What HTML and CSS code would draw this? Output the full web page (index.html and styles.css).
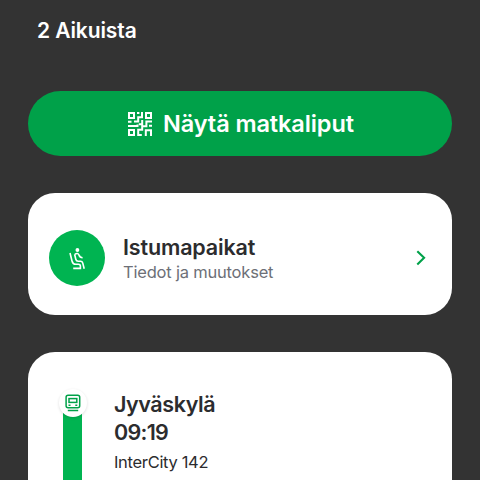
FILE: index.html
```html
<!DOCTYPE html>
<html lang="fi">
<head>
<meta charset="utf-8">
<title>Matka</title>
<link rel="stylesheet" href="styles.css">
</head>
<body>
<main class="screen">
  <p class="passengers"><span>2 Aikuista</span></p>
  <button class="tickets" type="button">
    <svg class="qr" viewBox="0 0 24 24" fill="none" stroke="#fff" stroke-width="2">
      <path d="M1 1h5v5H1zM18 1h5v5h-5zM1 18h5v5H1z"/>
      <path d="M9 1h2.4M14 0v5.2h-3.8v4.3H6M0 9.8h3.5M0 14h9.5v-1.6M14.2 8v4.2h-3.4M24 9.6h-5.6v4.6h-4.2v3.6h-4V23h3.6M21 13.8h3M17.8 24v-5.8H23V24"/>
    </svg>
    <span>Näytä matkaliput</span>
  </button>
  <section class="card seats">
    <div class="seat-badge">
      <svg class="seat" viewBox="0 0 18 24" fill="none" stroke="#fff" stroke-width="1.6">
        <circle cx="9.4" cy="4" r="1.9" fill="#fff" stroke="none"/>
        <path d="M2 7 4 15q.8 3.3 3.8 3.3h2.6q2 0 2 2v2.1H5.2M6.6 8.2l1.2 5q.5 2 2.4 2h2.4q1.6 0 2.1 1.7l1.5 5.8M6.9 8.2q3-1.8 4.1.9.8 2.6 3.6 2.6"/>
      </svg>
    </div>
    <div class="seat-copy">
      <h2 class="seat-title"><span>Istumapaikat</span></h2>
      <p class="seat-info"><span>Tiedot ja muutokset</span></p>
    </div>
    <svg class="chevron" viewBox="0 0 10 16" fill="none" stroke="#00a149" stroke-width="2.1"><path d="m1.3 1.2 6.8 6.6-6.8 6.6"/></svg>
  </section>
  <section class="card trip">
    <div class="track">
      <div class="stop">
        <svg class="train" viewBox="0 0 16 18" fill="none" stroke="#00a149" stroke-width="1.5">
          <rect x="1.1" y="1.2" width="13.6" height="12.6" rx="2"/>
          <rect x="4" y="4.6" width="7.8" height="3.8"/>
          <path d="M3.5 11.2h2M10.3 11.2h2M2.8 16.6h10.4"/>
        </svg>
      </div>
    </div>
    <div class="departure">
      <h2 class="place"><span>Jyväskylä</span></h2>
      <p class="time"><span>09:19</span></p>
      <p class="service"><span>InterCity 142</span></p>
    </div>
  </section>
</main>
</body>
</html>
```
FILE: styles.css
```css
* { box-sizing: border-box; }
body { margin: 0; background: #333; color: #2c2c2e; font-family: Inter, "Liberation Sans", sans-serif; }
h2, p { margin: 0; font-weight: 600; white-space: nowrap; }
.screen { height: 480px; overflow: hidden; padding: 17px 28px 0; }
.passengers { padding-left: 9px; color: #fff; font-size: 21px; line-height: 28px; height: 74px; letter-spacing: -0.1px; }
.tickets { display: flex; align-items: center; justify-content: flex-start; width: 424px; height: 65px; margin: 0 0 37px; padding: 0 0 0 100px; gap: 11px; border: 0; border-radius: 33px; background: #00a149; color: #fff; font: 600 23.5px/32px Inter, "Liberation Sans", sans-serif; letter-spacing: -0.1px; }
.qr { width: 24px; height: 24px; flex: none; }
.card { background: #fff; border-radius: 27px; display: flex; }
.seats { height: 122px; align-items: center; padding: 8px 26px 0 21px; margin-bottom: 37px; }
.seat-badge { width: 56px; height: 56px; border-radius: 50%; background: #00b451; display: grid; place-items: center; }
.seat { width: 18px; height: 24px; }
.seat-copy { flex: 1; padding-left: 18px; }
.seat-title { font-size: 21.5px; line-height: 28px; letter-spacing: -0.15px; }
.seat-info { font-size: 16.5px; line-height: 22px; font-weight: 400; color: #6d7077; letter-spacing: -0.2px; }
.chevron { width: 10px; height: 16px; }
.trip { height: 200px; padding: 37px 30px 0; }
.track { width: 19px; height: 200px; margin-left: 5px; background: linear-gradient(transparent 14px, #00b451 14px); }
.stop { width: 28px; height: 28px; margin-left: -4px; border-radius: 50%; background: #fff; display: grid; place-items: center; box-shadow: 0 1px 3px #0002; }
.train { width: 16px; height: 18px; }
.departure { padding: 1px 0 0 32px; }
.place, .time { font-size: 21.5px; line-height: 28px; letter-spacing: -0.4px; }
.time { letter-spacing: -0.7px; }
.service { font-size: 16.5px; line-height: 24px; font-weight: 400; margin-top: 4px; letter-spacing: -0.32px; }
```
